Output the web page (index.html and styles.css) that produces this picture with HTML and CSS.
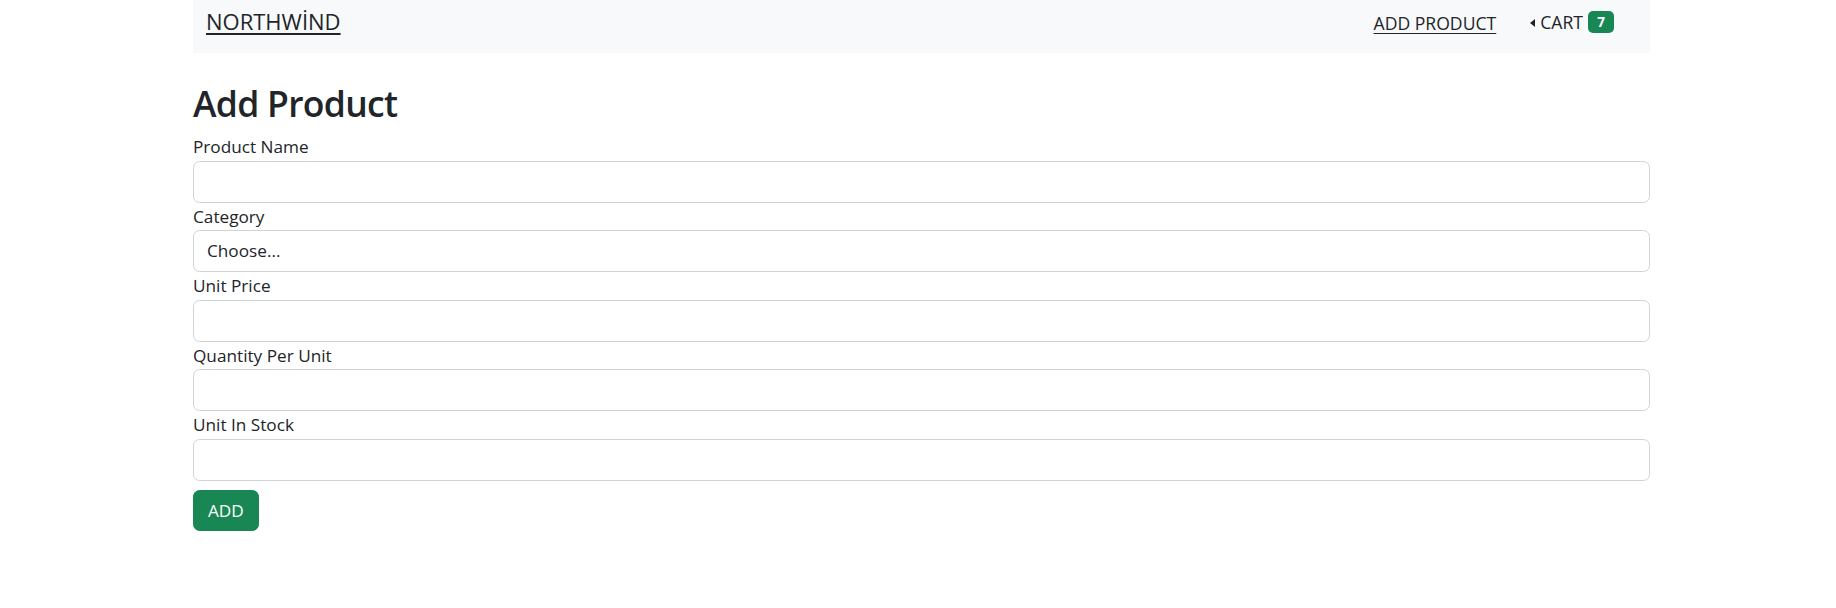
FILE: index.html
```html
<!DOCTYPE html>
<html lang="en">
<head>
<meta charset="utf-8">
<title>Northwind - Add Product</title>
<link rel="stylesheet" href="styles.css">
</head>
<body>
<div class="container">
  <nav class="navbar">
    <a class="brand" href="#">NORTHWİND</a>
    <div class="nav-right">
      <a class="nav-link" href="#">ADD PRODUCT</a>
      <div class="cart">
        <span class="caret"></span>
        <span class="cart-text">CART</span>
        <span class="badge">7</span>
      </div>
    </div>
  </nav>

  <h1 class="title">Add Product</h1>
  <form class="form">
    <label class="label">Product Name</label>
    <div class="input"></div>
    <label class="label">Category</label>
    <div class="input select">Choose...</div>
    <label class="label">Unit Price</label>
    <div class="input"></div>
    <label class="label">Quantity Per Unit</label>
    <div class="input"></div>
    <label class="label">Unit In Stock</label>
    <div class="input"></div>
    <div class="actions">
      <button type="button" class="btn">ADD</button>
    </div>
  </form>
</div>
</body>
</html>
```

FILE: styles.css
```css
* { box-sizing: border-box; }

html, body {
  margin: 0;
  padding: 0;
  background: #ffffff;
}

body {
  font-family: "Open Sans", "Noto Sans", sans-serif;
  color: #212529;
  font-size: 17.2px;
}

.container {
  width: 1457px;
  margin-left: 193px;
}

.navbar {
  height: 53px;
  background: #f8f9fa;
  display: flex;
  align-items: flex-start;
  justify-content: space-between;
  padding: 0 36px 0 13px;
}

.brand {
  font-size: 22px;
  color: #212529;
  text-decoration: underline;
  text-underline-offset: 3px;
  line-height: 30px;
  margin-top: 6.3px;
}

.nav-right {
  display: flex;
  align-items: flex-start;
  gap: 34px;
}

.nav-link {
  font-size: 17.6px;
  color: #212529;
  text-decoration: underline;
  text-underline-offset: 3px;
  line-height: 26px;
  margin-top: 9.5px;
}

.cart {
  display: flex;
  align-items: center;
  font-size: 17.6px;
  line-height: 26px;
  margin-top: 8.5px;
}

.caret {
  width: 0;
  height: 0;
  border-top: 4px solid transparent;
  border-bottom: 4px solid transparent;
  border-right: 5px solid #212529;
  margin-right: 5px;
  margin-top: 2px;
}

.cart-text {
  margin-right: 5px;
}

.badge {
  display: flex;
  align-items: center;
  justify-content: center;
  width: 26px;
  height: 22px;
  border-radius: 5px;
  background: #198754;
  color: #ffffff;
  font-weight: 700;
  font-size: 13.5px;
}

.title {
  font-size: 35.5px;
  font-weight: 600;
  letter-spacing: -0.7px;
  line-height: 43px;
  margin: 28.6px 0 8.5px;
}

.form {
  display: flex;
  flex-direction: column;
}

.label {
  display: block;
  line-height: 27.5px;
}

.input {
  height: 42px;
  border: 1px solid #ced4da;
  border-radius: 6.6px;
  background: #ffffff;
}

.select {
  padding-left: 13px;
  display: flex;
  align-items: center;
  line-height: 26px;
}

.actions {
  margin-top: 9.7px;
}

.btn {
  font-family: inherit;
  font-size: 17.2px;
  height: 41px;
  padding: 0 14px;
  border: 1px solid #198754;
  border-radius: 6.6px;
  background: #198754;
  color: #ffffff;
  cursor: pointer;
}
```
